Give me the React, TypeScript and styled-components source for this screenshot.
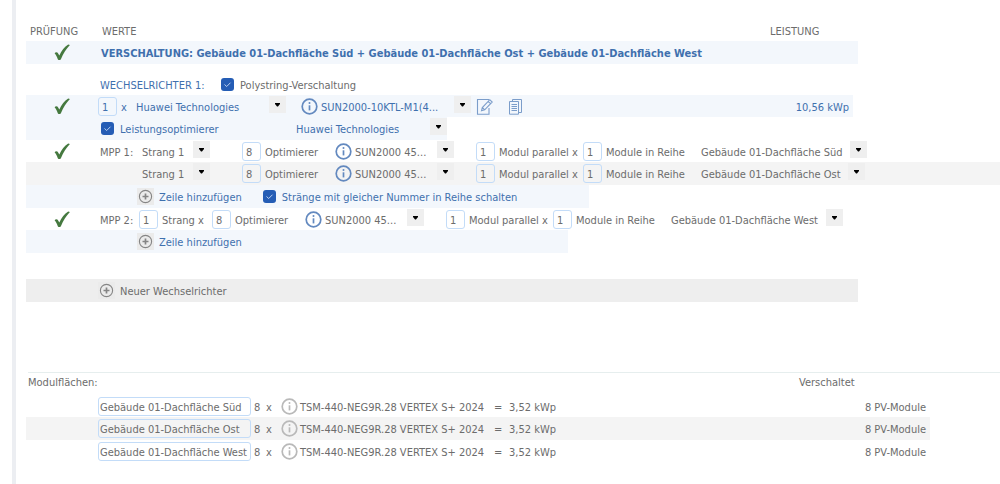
import React from "react";
import styled, { createGlobalStyle, css } from "styled-components";

const GREY = "#6c6c6c";
const BLUE = "#3f70ae";

const GlobalStyle = createGlobalStyle`
  * { box-sizing: border-box; }
  body {
    margin: 0;
    background: #fff;
    color: ${GREY};
    font: 11px/16px "DejaVu Sans Condensed", "DejaVu Sans", Tahoma, sans-serif;
  }
`;

const Page = styled.main`
  min-height: 100vh;
  margin-left: 12px;
  padding: 20px 0 0 10px;
  border-left: 4px solid #eceef2;
`;

const tones = { none: "transparent", blue: "#f3f7fc", grey: "#f4f4f4", dark: "#eeeeee" };

const Row = styled.div<{ $tone?: keyof typeof tones; $tall?: boolean; $max?: number; $blue?: boolean }>`
  display: flex;
  align-items: center;
  height: ${(p) => (p.$tall ? 23 : 22)}px;
  max-width: ${(p) => (p.$max ? `${p.$max}px` : "none")};
  background: ${(p) => tones[p.$tone ?? "none"]};
  color: ${(p) => (p.$blue ? BLUE : GREY)};
  white-space: nowrap;
`;

const HeaderRow = styled(Row)`
  height: 21px;
  padding-left: 4px;
`;

const InverterTitle = styled(Row)`
  height: 21px;
  margin-top: 10px;
`;

const NewInverterRow = styled(Row)`
  margin-top: 26px;
`;

const StatusCell = styled.div`
  flex: none;
  display: flex;
  width: 72px;
  padding-left: 28px;
`;

const Cell = styled.span<{ $w?: number; $pad?: number }>`
  flex: none;
  width: ${(p) => (p.$w ? `${p.$w}px` : "auto")};
  padding-left: ${(p) => p.$pad ?? 0}px;
  padding-top: 3px;
`;

const BlueCell = styled(Cell)`
  color: ${BLUE};
`;

const EndCell = styled(Cell)`
  margin-left: auto;
  padding-right: 4px;
`;

const PushEnd = styled.span`
  display: flex;
  align-self: stretch;
  margin-left: auto;
`;

const Title = styled.h2`
  margin: 0;
  padding: 2px 0 0 3px;
  font-size: 11px;
  line-height: 16px;
  font-weight: 700;
`;

const field = css`
  flex: none;
  height: 19px;
  margin: 0;
  border: 1px solid #c3dcf8;
  border-radius: 3px;
  background: transparent;
  color: inherit;
  font: inherit;
  outline: none;
`;

const NumberField = styled.input`
  ${field}
  width: 19px;
  padding: 2px 0 0 3px;
`;

const NameField = styled.input`
  ${field}
  width: 153px;
  padding: 2px 0 0 1px;
`;

const SelectBox = styled.span<{ $w: number }>`
  flex: none;
  display: grid;
  align-self: stretch;
  width: ${(p) => p.$w}px;

  select, span { grid-area: 1 / 1; }

  select {
    appearance: none;
    width: 100%;
    margin: 0;
    padding: 3px 17px 0 0;
    border: 0;
    background: transparent;
    color: inherit;
    font: inherit;
    outline: none;
  }
`;

const Arrow = styled.span`
  display: grid;
  place-items: center;
  justify-self: end;
  width: 17px;
  height: 17px;
  margin-top: 1px;
  background: #efefef;
  pointer-events: none;
`;

const CheckLabel = styled.label`
  flex: none;
  display: flex;
  align-items: center;
  gap: 6px;
`;

const Tick = styled.span`
  display: grid;
  width: 13px;
  height: 13px;

  input, svg { grid-area: 1 / 1; }
  input {
    appearance: none;
    width: 13px;
    height: 13px;
    margin: 0;
    border-radius: 3px;
    background: #9bb4dc;
  }
  input:checked { background: #255db5; }
  svg { pointer-events: none; }
`;

const IconButton = styled.button<{ $w?: number }>`
  flex: none;
  display: grid;
  place-items: center;
  width: ${(p) => p.$w ?? 17}px;
  height: 17px;
  padding: 0;
  border: 0;
  background: transparent;
  color: inherit;
`;

const AddButton = styled.button`
  flex: none;
  display: flex;
  align-items: center;
  gap: 5px;
  padding: 0;
  border: 0;
  background: transparent;
  color: inherit;
  font: inherit;
`;

const PlusBox = styled.span`
  display: grid;
  place-items: center;
  width: 17px;
  height: 17px;
  background: #ebebeb;
`;

const Gap = styled.span<{ $w: number }>`
  flex: none;
  width: ${(p) => p.$w}px;
`;

const Modules = styled.section`
  margin-top: 70px;
`;

const ModulesHead = styled.div`
  display: flex;
  align-items: center;
  height: 17px;
  margin: 0 0 6px 2px;
  border-top: 1px solid #e6eeee;
`;

const CheckMark = () => (
  <svg width="17" height="17" viewBox="0 0 17 17" role="img" aria-label="OK">
    <path d="M0.6 9.3C1.3 8 3 7.8 3.7 8.8L5.3 11.6C7.6 6.6 10.4 3 14.2 0.6L15.9 0.9C12.4 4.6 9.3 9.3 6.9 15.2C6 16.4 4.4 16.4 3.8 15.2C3 13 2 10.7 0.6 9.3Z" fill="#45793f" />
  </svg>
);

const InfoIcon = ({ color }: { color: string }) => (
  <svg width="17" height="17" viewBox="0 0 17 17" fill="none" stroke={color}>
    <circle cx="8.5" cy="8.5" r="7.3" strokeWidth="1.7" />
    <path d="M8.5 7.3V12.4" strokeWidth="1.7" />
    <circle cx="8.5" cy="5" r="1" fill={color} stroke="none" />
  </svg>
);

const PlusIcon = () => (
  <svg width="15" height="15" viewBox="0 0 15 15" fill="none" stroke="#858585">
    <circle cx="7.5" cy="7.5" r="6.1" strokeWidth="1.1" />
    <path d="M7.5 4.5V10.5M4.5 7.5H10.5" strokeWidth="1.7" />
  </svg>
);

const EditIcon = () => (
  <svg width="17" height="17" viewBox="0 0 17 17" fill="none" stroke="#7b9dca" strokeWidth="1.1">
    <path d="M13 1.5H1.5V16.2H13V10" />
    <path d="M5.5 12.8L6.3 9.5L13.8 1.7L16.2 4L8.7 11.800ZM6.3 9.5L8.7 11.800M12 3.4L14.5 5.6" />
  </svg>
);

const CopyIcon = () => (
  <svg width="15" height="17" viewBox="0 0 15 17" fill="none" stroke="#7b9dca" strokeWidth="1">
    <path d="M4.5 3.5V1.5H13.5V14.5H10.5" />
    <path d="M1.5 3.5H10.5V16.2H1.5Z" />
    <path d="M3.5 6.5H9M3.5 8.5H9M3.5 10.5H9M3.5 12.5H9" />
  </svg>
);

const Select = ({ value, label, width }: { value: string; label: string; width: number }) => (
  <SelectBox $w={width}>
    <select aria-label={label}>
      <option>{value}</option>
    </select>
    <Arrow>
      <svg width="7" height="4" viewBox="0 0 7 4"><path d="M1 0H6V1L4 3.5H3L1 1Z" fill="#000" /></svg>
    </Arrow>
  </SelectBox>
);

const Checkbox = ({ children }: { children: React.ReactNode }) => (
  <CheckLabel>
    <Tick>
      <input type="checkbox" defaultChecked />
      <svg width="13" height="13" viewBox="0 0 13 13"><path d="M3.5 6.5L5.7 8.5L9.5 4.7" fill="none" stroke="#bcd0f0" /></svg>
    </Tick>
    <Cell>{children}</Cell>
  </CheckLabel>
);

const Info = ({ grey }: { grey?: boolean }) => (
  <IconButton type="button" aria-label="Info"><InfoIcon color={grey ? "#b9b9b9" : "#6389bf"} /></IconButton>
);

const Add = ({ children }: { children: React.ReactNode }) => (
  <AddButton type="button">
    <PlusBox><PlusIcon /></PlusBox>
    <Cell>{children}</Cell>
  </AddButton>
);

const StringDetails = ({ surface, width }: { surface: string; width: number }) => (
  <>
    <NumberField aria-label="Anzahl Optimierer" defaultValue="8" />
    <Cell $w={74} $pad={4}>Optimierer</Cell>
    <Info />
    <Gap $w={3} />
    <Select label="Optimierer Typ" value="SUN2000 45..." width={99} />
    <Gap $w={22} />
    <NumberField aria-label="Module parallel" defaultValue="1" />
    <Cell $w={88} $pad={4}>Modul parallel x</Cell>
    <NumberField aria-label="Module in Reihe" defaultValue="1" />
    <Cell $w={99} $pad={4}>Module in Reihe</Cell>
    <Select label="Modulfläche" value={surface} width={width} />
  </>
);

const surfaces = ["Gebäude 01-Dachfläche Süd", "Gebäude 01-Dachfläche Ost", "Gebäude 01-Dachfläche West"];

export default function App() {
  return (
    <>
      <GlobalStyle />
      <Page>
        <HeaderRow $max={832}>
          <Cell $w={72}>PRÜFUNG</Cell>
          <Cell $w={668}>WERTE</Cell>
          <Cell>LEISTUNG</Cell>
        </HeaderRow>
        <Row $tone="blue" $tall $blue $max={832}>
          <StatusCell><CheckMark /></StatusCell>
          <Title>VERSCHALTUNG: {surfaces.join(" + ")}</Title>
        </Row>

        <InverterTitle>
          <StatusCell />
          <BlueCell $w={123} $pad={2}>WECHSELRICHTER 1:</BlueCell>
          <Checkbox>Polystring-Verschaltung</Checkbox>
        </InverterTitle>
        <Row $tone="blue" $blue $max={827}>
          <StatusCell><CheckMark /></StatusCell>
          <NumberField aria-label="Anzahl Wechselrichter" defaultValue="1" />
          <Cell $w={19} $pad={4}>x</Cell>
          <Select label="Hersteller" value="Huawei Technologies" width={150} />
          <Gap $w={15} />
          <Info />
          <Gap $w={3} />
          <Select label="Wechselrichter" value="SUN2000-10KTL-M1(4..." width={150} />
          <Gap $w={5} />
          <IconButton type="button" aria-label="Bearbeiten"><EditIcon /></IconButton>
          <Gap $w={15} />
          <IconButton type="button" aria-label="Kopieren" $w={15}><CopyIcon /></IconButton>
          <EndCell>10,56 kWp</EndCell>
        </Row>
        <Row $tone="blue" $tall $blue $max={421}>
          <StatusCell />
          <Gap $w={3} />
          <Checkbox>Leistungsoptimierer</Checkbox>
          <PushEnd><Select label="Hersteller Leistungsoptimierer" value="Huawei Technologies" width={151} /></PushEnd>
        </Row>

        <Row>
          <StatusCell><CheckMark /></StatusCell>
          <Cell $w={44} $pad={2}>MPP 1:</Cell>
          <Select label="Strang" value="Strang 1" width={68} />
          <Gap $w={32} />
          <StringDetails surface={surfaces[0]} width={166} />
        </Row>
        <Row $tone="grey" $tall>
          <StatusCell />
          <Gap $w={44} />
          <Select label="Strang" value="Strang 1" width={68} />
          <Gap $w={32} />
          <StringDetails surface={surfaces[1]} width={164} />
        </Row>
        <Row $tone="blue" $tall $blue $max={563}>
          <StatusCell />
          <Gap $w={39} />
          <Add>Zeile hinzufügen</Add>
          <Gap $w={21} />
          <Checkbox>Stränge mit gleicher Nummer in Reihe schalten</Checkbox>
        </Row>
        <Row>
          <StatusCell><CheckMark /></StatusCell>
          <Cell $w={41} $pad={2}>MPP 2:</Cell>
          <NumberField aria-label="Anzahl Stränge" defaultValue="1" />
          <Cell $w={54} $pad={4}>Strang x</Cell>
          <StringDetails surface={surfaces[2]} width={172} />
        </Row>
        <Row $tone="blue" $tall $blue $max={542}>
          <StatusCell />
          <Gap $w={39} />
          <Add>Zeile hinzufügen</Add>
        </Row>

        <NewInverterRow $tone="dark" $tall $max={832}>
          <StatusCell />
          <Add>Neuer Wechselrichter</Add>
        </NewInverterRow>

        <Modules>
          <ModulesHead>
            <Cell $w={771}>Modulflächen:</Cell>
            <Cell>Verschaltet</Cell>
          </ModulesHead>
          {surfaces.map((name, i) => (
            <Row key={name} $tone={i === 1 ? "grey" : "none"} $tall={i === 1} $max={904}>
              <StatusCell />
              <NameField aria-label="Modulfläche" defaultValue={name} />
              <Cell $w={15} $pad={3}>8</Cell>
              <Cell $w={15}>x</Cell>
              <Info grey />
              <Cell $w={196} $pad={2}>TSM-440-NEG9R.28 VERTEX S+ 2024</Cell>
              <Cell $w={15}>=</Cell>
              <Cell>3,52 kWp</Cell>
              <EndCell>8 PV-Module</EndCell>
            </Row>
          ))}
        </Modules>
      </Page>
    </>
  );
}
